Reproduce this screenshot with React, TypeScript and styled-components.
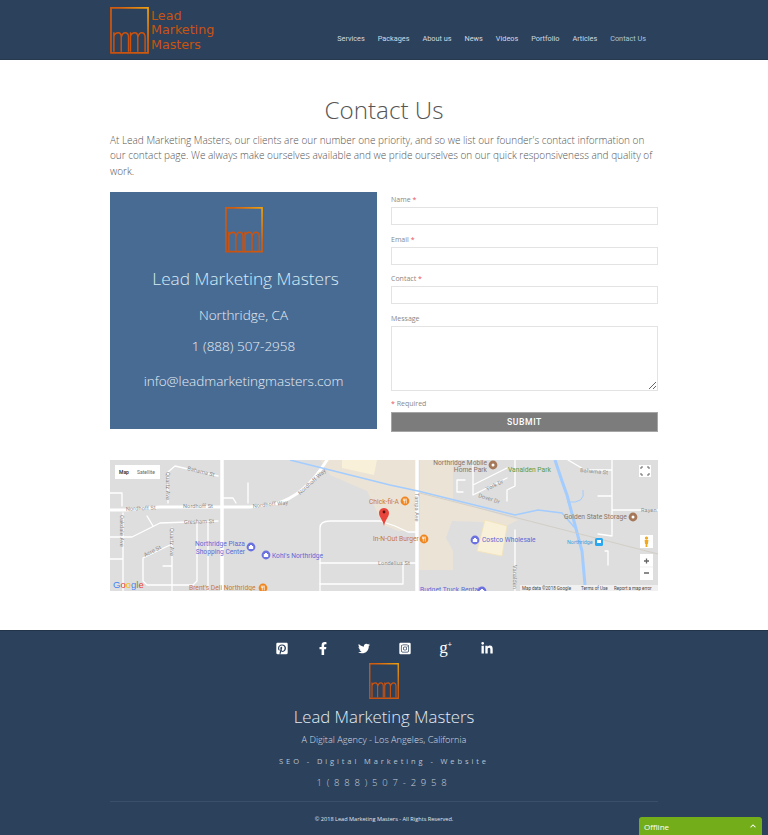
import styled, { createGlobalStyle } from "styled-components";
import { FaPinterestSquare, FaFacebookF, FaTwitter, FaInstagramSquare, FaLinkedinIn } from "react-icons/fa";
import { IoIosArrowUp } from "react-icons/io";

const NAV_ITEMS = ["Services", "Packages", "About us", "News", "Videos", "Portfolio", "Articles", "Contact Us"];

const MM_LETTER = "M0 20V0M0 4C1 1 3 .5 4.5 .5C6.5 .5 7.5 2 7.5 5V20M7.5 5C8.5 1.5 10 .5 11.5 .5C14 .5 15 2 15 5V20";

const MmLogo = ({ size }: { size: number }) => (
  <svg width={size} height={size * 1.2} viewBox="0 0 40 48">
    <defs>
      <linearGradient id="mmFrame" x1="0" y1="1" x2="1" y2="0">
        <stop offset="0" stopColor="#c9500f" />
        <stop offset="0.6" stopColor="#cf5c0f" />
        <stop offset="1" stopColor="#eda010" />
      </linearGradient>
    </defs>
    <path d="M1 1H39V47H1Z" fill="none" stroke="url(#mmFrame)" strokeWidth="1.8" />
    <g fill="none" stroke="#cc520e" strokeWidth="1.5">
      <path d={MM_LETTER} transform="translate(4 26)" />
      <path d={MM_LETTER} transform="translate(21 26)" />
    </g>
  </svg>
);

const PoiIcon = ({ x, y, kind }: { x: number; y: number; kind: "food" | "shop" | "place" }) => (
  <g transform={`translate(${x} ${y})`}>
    <circle r="4.4" fill={kind === "food" ? "#f0861e" : kind === "shop" ? "#6b72e0" : "#a5785a"} />
    {kind === "food" && <path d="M-1.6 -2.4V-.4H.2V-2.4M-.7 -2.4V2.5M1.3 -2.4V2.5" fill="none" stroke="#fff" strokeWidth=".7" />}
    {kind === "shop" && <path d="M-2.2 -1H2.2V2H-2.2ZM-1 -1V-2H1V-1" fill="#fff" />}
    {kind === "place" && <circle r="1.5" fill="#fff" />}
  </g>
);

const ContactMap = () => (
  <MapSvg viewBox="0 0 548 131">
    <rect width="548" height="131" fill="#dedede" />
    <path d="M210 0H305V71H288L273 65L257 31L220 15Z" fill="#ebe3d6" />
    <path d="M310 0H343V40L310 31Z" fill="#ebe3d6" />
    <path d="M310 31L408 60L396 66L370 62L342 61L336 78L343 91V110H309Z" fill="#ebe3d6" />
    <path d="M232 0H267L264 15L232 8Z" fill="#f8f0d8" />
    <path d="M375 60L397 66L392 96L367 91Z" fill="#f8f0d8" stroke="#f2e3b8" strokeWidth="0.8" />
    <g fill="none" stroke="#fff" strokeLinecap="round" strokeLinejoin="round">
      <path d="M112 0V131" strokeWidth="3.5" />
      <path d="M307 0V131" strokeWidth="3.5" />
      <path d="M0 50L15 50L50 47H140L165 44Q195 36 217 0" strokeWidth="3" />
      <g strokeWidth="1.3">
        <path d="M58 43V12L65 6L108 16" />
        <path d="M0 77H22L50 63L108 61" />
        <path d="M37 56L43 66" />
        <path d="M13 53V131M0 33H12V46M0 99H13" />
        <path d="M87 63V121L83 125H37L33 121V98L62 84" />
        <path d="M62 68V131M98 63V131M53 106H62" />
        <path d="M138 23V43M113 38H123L126 43" />
        <path d="M210 131V68Q210 61 220 61H270L285 66L298 72H306" />
        <path d="M210 103H306M210 124H293V105" />
        <path d="M363 0V35M405 0V26L397 30V41M363 25L397 8M363 35L397 18M355 20H347V32H353" />
        <path d="M405 70V131" />
        <path d="M458 0L475 10H502M502 0V76M488 36H502M502 50H548M488 74L502 76" />
        <path d="M495 91H498V105" />
      </g>
    </g>
    <path d="M180 0L280 25L308 31L405 55L428 50L452 53L465 68" fill="none" stroke="#a3ccff" strokeWidth="1.5" />
    <path d="M445 0L452 21L457 35L465 65L472 91L475 125" fill="none" stroke="#a3ccff" strokeWidth="3" />
    <path d="M457 42Q476 44 473 30" fill="none" stroke="#a3ccff" strokeWidth="1" />
    <path d="M310 33L548 94" fill="none" stroke="#cfcac0" strokeWidth="0.8" />
    <MapLabel x="16" y="51" transform="rotate(-3 16 51)">Nordhoff St</MapLabel>
    <MapLabel x="73" y="48">Nordhoff St</MapLabel>
    <MapLabel x="143" y="48" transform="rotate(-6 143 48)">Nordhoff Way</MapLabel>
    <MapLabel x="190" y="35" transform="rotate(-42 190 35)">Nordhoff Way</MapLabel>
    <MapLabel x="77" y="10" transform="rotate(14 77 10)">Bahama St</MapLabel>
    <MapLabel x="74" y="64" transform="rotate(-2 74 64)">Gresham St</MapLabel>
    <MapLabel x="56" y="12" transform="rotate(90 56 12)">Quartz Ave</MapLabel>
    <MapLabel x="10" y="55" transform="rotate(90 10 55)">Oakdale Ave</MapLabel>
    <MapLabel x="60" y="68" transform="rotate(90 60 68)">Quartz Ave</MapLabel>
    <MapLabel x="35" y="97" transform="rotate(-27 35 97)">Acre St</MapLabel>
    <MapLabel x="268" y="105">Londelius St</MapLabel>
    <MapLabel x="305" y="33" transform="rotate(90 305 33)">Tampa Ave</MapLabel>
    <MapLabel x="377" y="31" transform="rotate(-26 377 31)">York Dr</MapLabel>
    <MapLabel x="368" y="37" transform="rotate(18 368 37)">Dover Dr</MapLabel>
    <MapLabel x="470" y="12" transform="rotate(5 470 12)">Bahama St</MapLabel>
    <MapLabel x="531" y="52">Rayen</MapLabel>
    <MapLabel x="403" y="105" transform="rotate(90 403 105)">Vanalden</MapLabel>
    <MapPoi x="259" y="44" $kind="food">Chick-fil-A</MapPoi>
    <MapPoi x="263" y="81" $kind="food">In-N-Out Burger</MapPoi>
    <MapPoi x="79" y="130" $kind="food">Brent's Deli Northridge</MapPoi>
    <MapPoi x="135" y="86" $kind="shop" textAnchor="end">Northridge Plaza</MapPoi>
    <MapPoi x="135" y="94" $kind="shop" textAnchor="end">Shopping Center</MapPoi>
    <MapPoi x="162" y="98" $kind="shop">Kohl's Northridge</MapPoi>
    <MapPoi x="372" y="82" $kind="shop">Costco Wholesale</MapPoi>
    <MapPoi x="310" y="132" $kind="shop">Budget Truck Rental</MapPoi>
    <MapPoi x="377" y="5" $kind="place" textAnchor="end">Northridge Mobile</MapPoi>
    <MapPoi x="377" y="12" $kind="place" textAnchor="end">Home Park</MapPoi>
    <MapPoi x="398" y="12" $kind="park">Vanalden Park</MapPoi>
    <MapPoi x="454" y="59" $kind="place">Golden State Storage</MapPoi>
    <MapPoi x="457" y="84" $kind="transit">Northridge</MapPoi>
    <PoiIcon x={141} y={87} kind="shop" />
    <PoiIcon x={156} y={95} kind="shop" />
    <PoiIcon x={365} y={80} kind="shop" />
    <PoiIcon x={372} y={131} kind="shop" />
    <PoiIcon x={153} y={128} kind="food" />
    <PoiIcon x={295} y={41} kind="food" />
    <PoiIcon x={314} y={79} kind="food" />
    <PoiIcon x={383} y={5} kind="place" />
    <PoiIcon x={523} y={57} kind="place" />
    <rect x="485" y="78" width="8" height="8" rx="1.5" fill="#29a7f0" />
    <path d="M487 80H491V83H487Z" fill="#fff" />
    <path d="M274 48C271 48 269 50.5 269 53C269 57 273 60 274 66C275 60 279 57 279 53C279 50.5 277 48 274 48Z" fill="#e8453c" />
    <circle cx="274" cy="52" r="1.4" fill="#5a1410" />
    <MapBox x="5" y="5" width="45" height="14" />
    <MapControl x="9" y="13.5" fontWeight="600" fill="#333">Map</MapControl>
    <MapControl x="27" y="13.5" fill="#666">Satellite</MapControl>
    <MapBox x="529" y="5" width="12" height="12" />
    <path d="M531 9V7H533M537 7H539V9M539 13V15H537M533 15H531V13" fill="none" stroke="#666" strokeWidth="1" />
    <MapBox x="530" y="75" width="13" height="13" />
    <path d="M536.5 76.5a1.6 1.6 0 1 1 -.01 0M534.6 80H538.4L538 84H537.4V87H535.6V84H535Z" fill="#f2a91f" />
    <MapBox x="530" y="94" width="13" height="26" />
    <path d="M534 101H539M536.5 98.5V103.5M534 113H539" stroke="#666" strokeWidth="1.3" />
    <path d="M530 107H543" stroke="#e6e6e6" strokeWidth="0.6" />
    <rect x="410" y="125" width="138" height="6" fill="#fff" opacity="0.55" />
    <MapAttribution x="412" y="129.5">Map data ©2018 Google</MapAttribution>
    <MapAttribution x="471" y="129.5">Terms of Use</MapAttribution>
    <MapAttribution x="504" y="129.5">Report a map error</MapAttribution>
    <GoogleMark x="3" y="127.5">
      <tspan fill="#4285f4">G</tspan>
      <tspan fill="#ea4335">o</tspan>
      <tspan fill="#fbbc05">o</tspan>
      <tspan fill="#4285f4">g</tspan>
      <tspan fill="#34a853">l</tspan>
      <tspan fill="#ea4335">e</tspan>
    </GoogleMark>
  </MapSvg>
);

const Field = ({ label, required }: { label: string; required?: boolean }) => (
  <FieldRow>
    <FieldLabel>
      {label} {required && <Star>*</Star>}
    </FieldLabel>
    <TextInput />
  </FieldRow>
);

const App = () => (
  <Page>
    <GlobalStyle />
    <Header>
      <Brand>
        <MmLogo size={39} />
        <BrandName>
          Lead
          <br />
          Marketing
          <br />
          Masters
        </BrandName>
      </Brand>
      <Nav>
        {NAV_ITEMS.map((item) => (
          <NavLink key={item} $active={item === "Contact Us"}>
            {item}
          </NavLink>
        ))}
      </Nav>
    </Header>
    <Main>
      <Title>Contact Us</Title>
      <Intro>
        At Lead Marketing Masters, our clients are our number one priority, and so we list our founder's contact
        information on our contact page. We always make ourselves available and we pride ourselves on our quick
        responsiveness and quality of work.
      </Intro>
      <ContactRow>
        <InfoCard>
          <MmLogo size={38} />
          <CardName>Lead Marketing Masters</CardName>
          <CardLine $gap={13}>Northridge, CA</CardLine>
          <CardLine $gap={10}>1 (888) 507-2958</CardLine>
          <CardLine $gap={14}>info@leadmarketingmasters.com</CardLine>
        </InfoCard>
        <Form>
          <Field label="Name" required />
          <Field label="Email" required />
          <Field label="Contact" required />
          <FieldRow>
            <FieldLabel>Message</FieldLabel>
            <MessageInput />
          </FieldRow>
          <RequiredNote>
            <Star>*</Star> Required
          </RequiredNote>
          <SubmitBtn type="button">SUBMIT</SubmitBtn>
        </Form>
      </ContactRow>
      <ContactMap />
    </Main>
    <Footer>
      <Socials>
        <SocialItem>
          <FaPinterestSquare />
        </SocialItem>
        <SocialItem>
          <FaFacebookF />
        </SocialItem>
        <SocialItem>
          <FaTwitter />
        </SocialItem>
        <SocialItem>
          <FaInstagramSquare />
        </SocialItem>
        <SocialItem>
          <GooglePlusGlyph>
            g<sup>+</sup>
          </GooglePlusGlyph>
        </SocialItem>
        <SocialItem>
          <FaLinkedinIn />
        </SocialItem>
      </Socials>
      <FooterLogo>
        <MmLogo size={30} />
      </FooterLogo>
      <FooterName>Lead Marketing Masters</FooterName>
      <Tagline>A Digital Agency - Los Angeles, California</Tagline>
      <Services>SEO - Digital Marketing - Website</Services>
      <Phone>1(888)507-2958</Phone>
      <Copyright>© 2018 Lead Marketing Masters - All Rights Reserved.</Copyright>
    </Footer>
    <ChatTab>
      Offline
      <IoIosArrowUp />
    </ChatTab>
  </Page>
);

const GlobalStyle = createGlobalStyle`
  html, body {
    margin: 0;
    padding: 0;
    background: #fff;
    font-family: "Open Sans", "Liberation Sans", sans-serif;
  }
  * {
    box-sizing: border-box;
  }
`;

const Page = styled.div`
  width: 768px;
  height: 835px;
  overflow: hidden;
  position: relative;
`;

const Header = styled.header`
  height: 60px;
  background: #2c415c;
  padding: 0 110px;
  display: flex;
  justify-content: space-between;
  border-bottom: 1px solid #26394f;
`;

const Brand = styled.div`
  display: flex;
  align-items: flex-start;
  padding-top: 7px;
  gap: 2px;
`;

const BrandName = styled.div`
  font-family: "DejaVu Sans", sans-serif;
  font-size: 12.7px;
  line-height: 14.3px;
  color: #c9540f;
  padding-top: 2px;
`;

const Nav = styled.nav`
  display: flex;
  align-items: flex-end;
  gap: 13px;
  padding-bottom: 12px;
  padding-right: 12px;
`;

const NavLink = styled.a<{ $active?: boolean }>`
  font-family: Roboto, sans-serif;
  font-size: 7.3px;
  line-height: 16px;
  color: ${(props) => (props.$active ? "#a9c6dc" : "#d3d9e0")};
`;

const Main = styled.main`
  padding: 0 110px;
  height: 570px;
`;

const Title = styled.h1`
  margin: 0;
  padding-top: 32px;
  font-size: 24.2px;
  line-height: 36px;
  font-weight: 300;
  text-align: center;
  color: #555;
`;

const Intro = styled.p`
  margin: 4.5px 0 0;
  font-size: 10px;
  line-height: 15.5px;
  font-weight: 300;
  color: #555;
`;

const ContactRow = styled.div`
  display: flex;
  gap: 14px;
  margin-top: 13px;
`;

const InfoCard = styled.div`
  width: 267px;
  height: 237px;
  background: #486b94;
  display: flex;
  flex-direction: column;
  align-items: center;
  padding-top: 15px;
`;

const CardName = styled.div`
  margin: 13px 0 0 4px;
  font-size: 17.3px;
  line-height: 26px;
  font-weight: 300;
  color: #d6ecf6;
`;

const CardLine = styled.div<{ $gap: number }>`
  margin-top: ${(props) => props.$gap}px;
  font-size: 13.5px;
  line-height: 21px;
  font-weight: 300;
  color: #e6eef5;
`;

const Form = styled.form`
  flex: 1;
  display: flex;
  flex-direction: column;
`;

const FieldRow = styled.div`
  display: flex;
  flex-direction: column;
  margin-bottom: 6.6px;
`;

const FieldLabel = styled.label`
  font-size: 7px;
  line-height: 15px;
  height: 15px;
  color: #888;
`;

const Star = styled.span`
  color: #e8505b;
`;

const TextInput = styled.input`
  height: 18px;
  width: 100%;
  border: 1px solid #e3e3e3;
  background: #fff;
  outline: none;
`;

const MessageInput = styled.textarea`
  display: block;
  width: 100%;
  height: 65px;
  border: 1px solid #e3e3e3;
  background: #fff;
  outline: none;
`;

const RequiredNote = styled.div`
  font-size: 7px;
  line-height: 14.6px;
  height: 15px;
  color: #888;
`;

const SubmitBtn = styled.button`
  height: 20px;
  width: 100%;
  padding: 0;
  border: 1px solid #a5a5a5;
  background: #7c7c7c;
  color: #fff;
  font-family: Roboto, sans-serif;
  font-size: 8.6px;
  font-weight: 500;
  letter-spacing: 0.6px;
`;

const MapSvg = styled.svg`
  display: block;
  width: 548px;
  height: 131px;
  margin-top: 28px;
`;

const MapLabel = styled.text`
  font-family: Roboto, sans-serif;
  font-size: 5.6px;
  fill: #8a8a8a;
  letter-spacing: 0.1px;
`;

const POI_COLORS: Record<string, string> = {
  food: "#c9783a",
  shop: "#6169d6",
  place: "#8a7566",
  park: "#5d9a42",
  transit: "#3f9fe0",
};

const MapPoi = styled.text<{ $kind: string }>`
  font-family: Roboto, sans-serif;
  font-size: ${(props) => (props.$kind === "transit" ? 5.4 : 6.7)}px;
  fill: ${(props) => POI_COLORS[props.$kind]};
`;

const MapBox = styled.rect`
  fill: #fff;
`;

const MapControl = styled.text`
  font-family: Roboto, sans-serif;
  font-size: 5px;
`;

const MapAttribution = styled.text`
  font-family: Roboto, sans-serif;
  font-size: 4.5px;
  fill: #444;
`;

const GoogleMark = styled.text`
  font-family: "Liberation Sans", sans-serif;
  font-size: 9.5px;
`;

const Footer = styled.footer`
  height: 205px;
  background: #2c415c;
  border-top: 1px solid #22344a;
  padding: 0 110px;
  display: flex;
  flex-direction: column;
  align-items: center;
  color: #fff;
`;

const Socials = styled.div`
  display: flex;
  gap: 29px;
  margin-top: 10px;
  height: 14px;
`;

const SocialItem = styled.span`
  width: 12px;
  height: 14px;
  font-size: 13px;
  line-height: 14px;
  display: flex;
  align-items: center;
  justify-content: center;
  color: #fff;
`;

const GooglePlusGlyph = styled.span`
  font-family: "Liberation Serif", serif;
  font-size: 17px;
  line-height: 14px;
  white-space: nowrap;

  sup {
    font-family: "Liberation Sans", sans-serif;
    font-size: 7px;
    line-height: 0;
    vertical-align: 6px;
  }
`;

const FooterLogo = styled.div`
  margin-top: 8px;
  height: 36px;
  line-height: 0;
`;

const FooterName = styled.div`
  margin-top: 6px;
  font-size: 16.75px;
  line-height: 24px;
  font-weight: 300;
  color: #e3ecf4;
`;

const Tagline = styled.div`
  margin-top: 4px;
  font-size: 9.2px;
  line-height: 14px;
  color: #d5dde6;
  font-weight: 300;
`;

const Services = styled.div`
  margin-top: 7px;
  font-size: 7.5px;
  line-height: 14px;
  letter-spacing: 2.9px;
  color: #b9c4d1;
`;

const Phone = styled.div`
  margin-top: 8px;
  font-size: 9.5px;
  line-height: 14px;
  letter-spacing: 4.8px;
  color: #c6d0db;
  font-weight: 300;
`;

const Copyright = styled.div`
  width: 100%;
  margin-top: 11px;
  padding-top: 12px;
  border-top: 1px solid #3a4f69;
  font-size: 5.6px;
  line-height: 10px;
  text-align: center;
  color: #e1e6ec;
`;

const ChatTab = styled.div`
  position: absolute;
  right: 6px;
  bottom: 0;
  width: 123px;
  height: 18px;
  background: #74ad1a;
  border-radius: 3px 3px 0 0;
  padding: 0 5px;
  display: flex;
  align-items: center;
  justify-content: space-between;
  font-size: 8px;
  color: #fff;
`;

export default App;
